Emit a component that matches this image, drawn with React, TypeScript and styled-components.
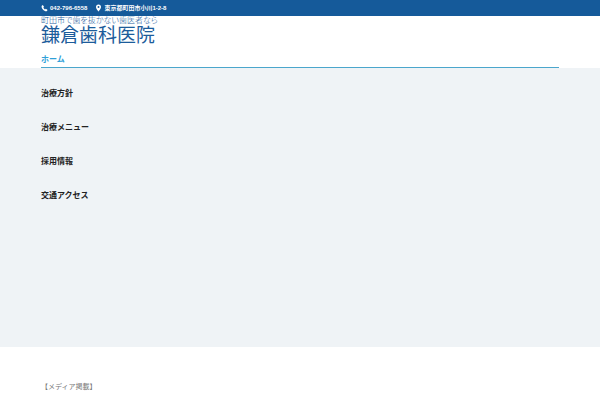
import React from "react";
import styled, { createGlobalStyle } from "styled-components";

const GlobalStyle = createGlobalStyle`
  *, *::before, *::after { box-sizing: border-box; }
  body {
    margin: 0;
    background: #fff;
    color: #222;
    font-family: Roboto, "Noto Sans CJK JP", sans-serif;
  }
`;

const Container = styled.div`
  margin: 0 41px;
`;

const TopBar = styled.div`
  background: #155a9a;
  color: #fff;
`;

const ContactList = styled(Container)`
  display: flex;
  align-items: center;
  gap: 8px;
  height: 16px;
  font-family: "Liberation Sans", "Noto Sans CJK JP", sans-serif;
  font-size: 6px;
  font-weight: 700;
  line-height: 16px;
`;

const ContactItem = styled.span`
  display: flex;
  align-items: center;
  gap: 2px;
  white-space: nowrap;
`;

const PhoneLink = styled.a`
  color: inherit;
  text-decoration: none;
`;

const Icon = styled.svg`
  width: 7px;
  height: 8px;
  fill: currentColor;
`;

const Header = styled.header`
  height: 52px;
  background: #fff;
  box-shadow: 0 1px 1px rgba(0, 0, 0, 0.06);
`;

const Logo = styled.a`
  display: block;
  width: fit-content;
  color: #1c5c9b;
  font-family: "Liberation Serif", "Noto Sans CJK JP", serif;
  text-decoration: none;
  white-space: nowrap;
`;

const Tagline = styled.span`
  display: block;
  font-size: 8px;
  font-weight: 300;
  line-height: 10px;
  font-feature-settings: "palt";
`;

const ClinicName = styled.span`
  display: block;
  font-size: 19px;
  font-weight: 400;
  line-height: 20px;
`;

const Menu = styled.ul`
  margin: 0;
  padding: 6px 0 0;
  list-style: none;
`;

const MenuItem = styled.li`
  & + & {
    margin-top: 18px;
  }
`;

const MenuLink = styled.a<{ $active?: boolean }>`
  display: block;
  height: 16px;
  border-bottom: 1px solid ${(p) => (p.$active ? "#4ba6cc" : "transparent")};
  color: ${(p) => (p.$active ? "#2fa0d8" : "#222")};
  font-size: 8px;
  font-weight: 700;
  line-height: 16px;
  text-decoration: none;
`;

const Hero = styled.section`
  height: 279px;
  background: #eff3f6;
`;

const Media = styled(Container)`
  padding: 32px 0 5px;
`;

const MediaTitle = styled.p`
  margin: 0;
  color: #777;
  font-size: 7px;
  line-height: 16px;
`;

const menu = ["ホーム", "治療方針", "治療メニュー", "採用情報", "交通アクセス"];

export default function App() {
  return (
    <>
      <GlobalStyle />
      <TopBar>
        <ContactList>
          <ContactItem>
            <Icon viewBox="0 0 14 16" aria-hidden="true">
              <path d="M3.6 2.2 1.2 3.8C.6 9 6 14.8 11.300 14.400L13.200 12.200 9.700 9.500 8 10.900C6.300 10 5.200 8.700 4.700 7L6 5.600Z" />
            </Icon>
            <PhoneLink href="tel:042-796-6558">042-796-6558</PhoneLink>
          </ContactItem>
          <ContactItem>
            <Icon viewBox="0 0 14 16" aria-hidden="true">
              <path
                fillRule="evenodd"
                d="M7 1a5 5 0 0 0-5 5c0 3.500 5 9 5 9s5-5.500 5-9a5 5 0 0 0-5-5Zm0 3.200a1.900 1.900 0 1 1 0 3.800 1.900 1.900 0 0 1 0-3.800Z"
              />
            </Icon>
            <span>東京都町田市小川1-2-8</span>
          </ContactItem>
        </ContactList>
      </TopBar>
      <Header>
        <Container>
          <Logo href="#">
            <Tagline>町田市で歯を抜かない歯医者なら</Tagline>
            <ClinicName>鎌倉歯科医院</ClinicName>
          </Logo>
          <nav>
            <Menu>
              {menu.map((label, i) => (
                <MenuItem key={label}>
                  <MenuLink href="#" $active={i === 0}>
                    {label}
                  </MenuLink>
                </MenuItem>
              ))}
            </Menu>
          </nav>
        </Container>
      </Header>
      <main>
        <Hero />
        <Media>
          <MediaTitle>【メディア掲載】</MediaTitle>
        </Media>
      </main>
    </>
  );
}
